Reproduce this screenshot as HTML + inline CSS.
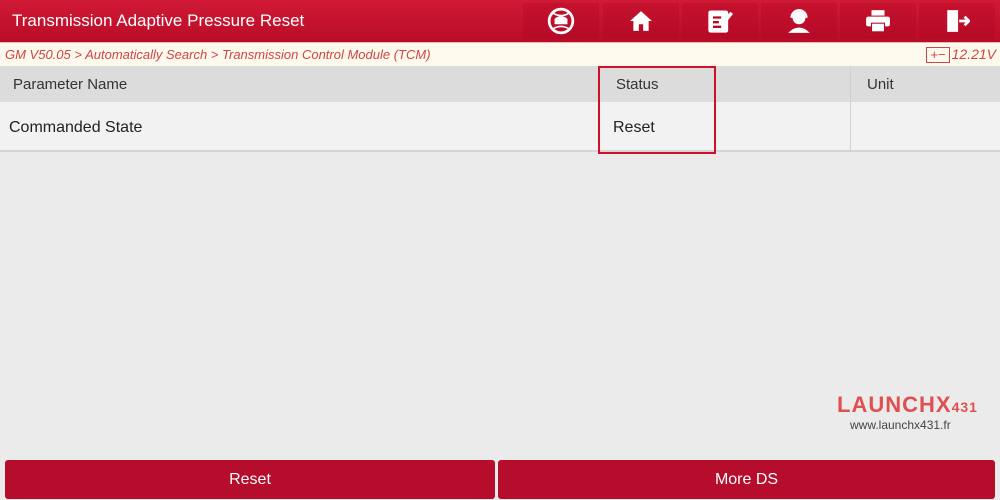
<html><head><style>
body{margin:0;width:1000px;height:500px;overflow:hidden;background:#ebebec;font-family:"Liberation Sans",sans-serif;position:relative}
.hd{position:absolute;left:0;top:0;width:1000px;height:42px;background:linear-gradient(#d11a35,#b90c27)}
.hd .t{position:absolute;left:12px;top:11px;color:#fff;font-size:17px}
.b{position:absolute;top:3px;width:76px;height:36px;background:linear-gradient(#c5122f,#b50a26);border-radius:2px;display:flex;align-items:center;justify-content:center}
.bc{position:absolute;top:42px;left:0;width:1000px;height:24px;background:#fdf9ec;border-top:1px solid #e6b7b7;color:#d04545;font-style:italic;font-size:13px}
.th{position:absolute;top:66px;left:0;width:1000px;height:36px;background:#dcdcdd;font-size:15px;color:#333}
.tr{position:absolute;top:102px;left:0;width:1000px;height:48px;background:#f2f2f3;border-bottom:2px solid #d5d5d5;font-size:16px;color:#222}
.v{position:absolute;top:66px;width:1px;height:86px;background:#d0d0d0}
.btn{position:absolute;top:460px;height:39px;background:#b50d2b;color:#fff;font-size:16px;display:flex;align-items:center;justify-content:center;border-radius:3px}
</style></head><body>
<div class="hd"><div class="t">Transmission Adaptive Pressure Reset</div>
<div class="b" style="left:523px"><svg width="28" height="28" viewBox="0 0 26 26"><circle cx="13" cy="13" r="11" fill="none" stroke="#fff" stroke-width="2.5"/><path d="M3 14h20M7 11q6-5 12 0v5H7z" fill="#fff"/><path d="M6 6q7 4 14 0M6 20q7-4 14 0" stroke="#fff" stroke-width="1.5" fill="none"/></svg></div>
<div class="b" style="left:603px"><svg width="24" height="24" viewBox="0 0 22 22"><path d="M11 2L1 11h3v9h5v-6h4v6h5v-9h3z" fill="#fff"/></svg></div>
<div class="b" style="left:682px"><svg width="28" height="28" viewBox="0 0 24 24"><rect x="2" y="3" width="17" height="19" rx="2" fill="#fff"/><path d="M6 9h7M6 13h5M6 17h7" stroke="#b50a26" stroke-width="2"/><path d="M14 15l8-10" stroke="#fff" stroke-width="3"/></svg></div>
<div class="b" style="left:761px"><svg width="28" height="26" viewBox="0 0 26 24"><circle cx="13" cy="9" r="6" fill="#fff"/><path d="M6 9a7 7 0 0114 0" fill="none" stroke="#fff" stroke-width="2"/><path d="M3 23q10-10 20 0z" fill="#fff"/></svg></div>
<div class="b" style="left:840px"><svg width="26" height="24" viewBox="0 0 24 22"><rect x="6" y="1" width="12" height="5" fill="#fff"/><rect x="1" y="7" width="22" height="9" rx="2" fill="#fff"/><rect x="6" y="13" width="12" height="8" fill="#fff" stroke="#b50a26"/></svg></div>
<div class="b" style="left:919px"><svg width="26" height="26" viewBox="0 0 24 24"><path d="M3 2h10v20H3z" fill="#fff"/><path d="M14 12h8M19 8l4 4-4 4" stroke="#fff" stroke-width="2.5" fill="none"/></svg></div>
</div>
<div class="bc"><span style="position:absolute;left:5px;top:4px">GM V50.05 &gt; Automatically Search &gt; Transmission Control Module (TCM)</span>
<span style="position:absolute;right:4px;top:3px;font-size:14px"><span style="display:inline-block;border:1.5px solid #d04545;font-style:normal;font-size:13px;line-height:14px;padding:0 3px;margin-right:2px">+−</span>12.21V</span></div>
<div class="th"><span style="position:absolute;left:13px;top:10px">Parameter Name</span><span style="position:absolute;left:616px;top:10px">Status</span><span style="position:absolute;left:867px;top:10px">Unit</span></div>
<div class="tr"><span style="position:absolute;left:9px;top:17px">Commanded State</span><span style="position:absolute;left:613px;top:17px">Reset</span></div>
<div class="v" style="left:598px"></div><div class="v" style="left:850px"></div>
<div style="position:absolute;left:598px;top:66px;width:114px;height:84px;border:2px solid #d0102a"></div>
<div style="position:absolute;left:837px;top:392px;color:#e05050;font-weight:bold;font-size:22px;letter-spacing:1px">LAUNCH<span style="font-size:22px">X</span><span style="font-size:14px">431</span></div>
<div style="position:absolute;left:850px;top:418px;color:#444;font-size:12px">www.launchx431.fr</div>
<div class="btn" style="left:5px;width:490px">Reset</div>
<div class="btn" style="left:498px;width:497px">More DS</div>
</body></html>
